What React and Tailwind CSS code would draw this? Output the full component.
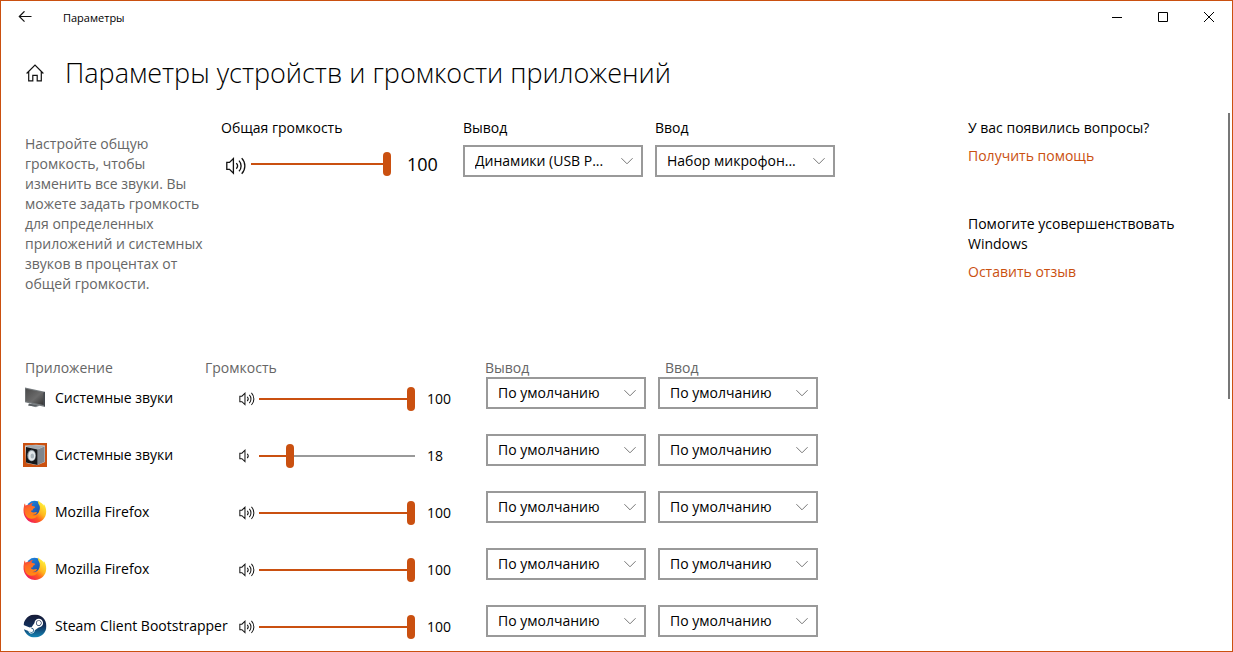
import { useState } from "react";
import { SiSteam } from "react-icons/si";

function SpeakerIcon({ className, quiet }) {
  return (
    <svg className={className} viewBox="0 0 20 18" fill="none" stroke="#111" strokeWidth="1.3" aria-hidden="true">
      <path d="M.8 5.4h2.7L7.4 1.6v14.6l-3.9-3.8H.8z" />
      <path d="M10.3 6.1c1.500 1.600 1.500 4 0 5.600" />
      {!quiet && <path d="M13 3.600c2.800 3 2.800 7.600 0 10.600" />}
      {!quiet && <path d="M15.700 1.100c4.200 4.500 4.200 11.100 0 15.600" />}
    </svg>
  );
}

function MonitorIcon() {
  return (
    <svg className="size-6" viewBox="0 0 24 24" aria-hidden="true">
      <defs>
        <linearGradient id="screen" x1="0" y1="0" x2="1" y2="1">
          <stop offset="0" stopColor="#4a4a4a" />
          <stop offset=".55" stopColor="#6b6b6b" />
          <stop offset="1" stopColor="#333" />
        </linearGradient>
      </defs>
      <path d="M5.500 19.200 10 17l7 2.600-4 1.700z" fill="#8b9094" />
      <path d="M2 1.500 21.800 5.700v15.200l-2-.4L2 16.200z" fill="#777c7f" />
      <path d="M2.700 2.800 20.500 6.500v12.600L2.700 15.200z" fill="url(#screen)" />
      <path d="m20.500 6.500 1.300-.8v15.200l-1.300-1.800z" fill="#30343a" />
      <path d="M6 17.500l5 1.200 4 .6-3 1.200-7-1z" fill="#595e62" />
    </svg>
  );
}

function LoudspeakerIcon() {
  return (
    <svg className="size-6" viewBox="0 0 24 24" aria-hidden="true">
      <path d="M0 0h24v24H0z" fill="#ca5010" />
      <path d="M2 2.500 13 1.800l9 .7v16.500l-8 3.200L3 20z" fill="#c9cdd1" />
      <path d="m14.500 6.500 7-3v15.300l-7 3.200z" fill="#7f858c" />
      <path d="M3 3.500 8 2l13.500 1-7 3.500z" fill="#a4a9ae" />
      <path d="M3 4l11.500 2.500V22L3 19.500z" fill="#15171a" />
      <ellipse cx="8.600" cy="12.500" rx="4.300" ry="5.800" fill="#8d979f" />
      <ellipse cx="8.800" cy="12.700" rx="3.400" ry="4.700" fill="#e2e8eb" />
      <ellipse cx="9.300" cy="13" rx="1.800" ry="2.600" fill="#a9b4bb" />
    </svg>
  );
}

function FirefoxIcon() {
  return (
    <svg className="size-6" viewBox="0 0 24 24" aria-hidden="true">
      <defs>
        <linearGradient id="flame" x1=".85" y1=".1" x2=".15" y2=".9">
          <stop offset="0" stopColor="#fff13a" />
          <stop offset=".4" stopColor="#ffb41c" />
          <stop offset=".65" stopColor="#ff5a1f" />
          <stop offset="1" stopColor="#f01560" />
        </linearGradient>
        <linearGradient id="globe" x1="0" y1="0" x2="1" y2="1">
          <stop offset="0" stopColor="#1a90e8" />
          <stop offset="1" stopColor="#1f3c98" />
        </linearGradient>
        <linearGradient id="fox" x1="0" y1="0" x2=".4" y2="1">
          <stop offset="0" stopColor="#f0304a" />
          <stop offset=".4" stopColor="#ff6a26" />
          <stop offset="1" stopColor="#ff8a14" />
        </linearGradient>
      </defs>
      <circle cx="11.500" cy="9" r="8.200" fill="url(#globe)" />
      <path d="M15.500.3c-.8 2.200-.2 3.500.8 4.900 1 1.600.6 5.200-.7 7.300-1 1.700-3 2.500-5 2.500L3 13 2 3.200C.4 6.500 0 11.500 1.200 15c1.800 5 6.200 8 10.800 8 6.300 0 11.200-4.900 11.200-11.200 0-3-.8-5.800-2.400-7.700v1.600C19.500 3 16.200 2.600 15.500.3z" fill="url(#flame)" />
      <path d="M2.100 3.200c-.2 1 .1 2 .4 2.600 1.200-1 2.400-1.400 3.800-1 1-1.200 2.300-1.900 3.900-2-1.200.9-1.700 1.900-1.600 2.800.9 1 3 .6 3.500 1.300-.1 1.200-2.100 1.700-2.300 2.300.2 1.300-.6 1.500-1.500 1.300-.9.800.3 2 2 2.100 1.500.1 2.400-.8 3.700-.4-.7 1.900-2.700 2.900-4.900 2.800 1.500 1 3.500.9 5.300-.2-.9 3-3 4-6 4-4.500-.2-6.900-3.900-6.800-8.200C1.100 8.300.8 5.600 2.100 3.200z" fill="url(#fox)" />
    </svg>
  );
}

function SteamIcon() {
  return (
    <svg className="size-6" viewBox="0 0 24 24" aria-hidden="true">
      <defs>
        <linearGradient id="steam" x1="0" y1="0" x2="0" y2="1">
          <stop offset="0" stopColor="#171a35" />
          <stop offset=".5" stopColor="#12305c" />
          <stop offset="1" stopColor="#1387b8" />
        </linearGradient>
      </defs>
      <circle cx="12" cy="12" r="11" fill="#fff" />
      <SiSteam x="0.500" y="0.500" size="23" fill="url(#steam)" />
    </svg>
  );
}

function VolumeSlider({ label, value, onChange, className }) {
  const fill = `linear-gradient(to right, #ca5010 ${value}%, #999 ${value}%)`;
  return (
    <input
      type="range"
      min="0"
      max="100"
      value={value}
      onChange={(e) => onChange(Number(e.target.value))}
      aria-label={label}
      style={{ backgroundImage: fill }}
      className={`h-6 cursor-pointer appearance-none bg-transparent bg-[length:100%_2px] bg-center bg-no-repeat [&::-webkit-slider-thumb]:h-6 [&::-webkit-slider-thumb]:w-2 [&::-webkit-slider-thumb]:appearance-none [&::-webkit-slider-thumb]:rounded-full [&::-webkit-slider-thumb]:bg-[#ca5010] ${className}`}
    />
  );
}

function DeviceSelect({ id, label, value, className }) {
  return (
    <div className={`grid shrink-0 items-center ${className}`}>
      <select
        id={id}
        aria-label={label}
        className="col-start-1 row-start-1 h-8 w-full appearance-none border-2 border-[#999] bg-white pr-7 pl-[10px] text-sm text-black"
      >
        <option>{value}</option>
      </select>
      <svg
        className="pointer-events-none col-start-1 row-start-1 mr-[10px] h-2 w-3 justify-self-end"
        viewBox="0 0 12 8"
        fill="none"
        stroke="#777"
        aria-hidden="true"
      >
        <path d="m.4 1.200 5.600 5.600 5.600-5.600" />
      </svg>
    </div>
  );
}

function AppRow({ icon: Icon, name, initial }) {
  const [volume, setVolume] = useState(initial);
  return (
    <tr className="flex h-[57px] items-start last:h-11">
      <td className="flex h-[42px] w-[216px] shrink-0 items-center gap-2 whitespace-nowrap">
        <Icon />
        {name}
      </td>
      <td className="flex h-[44px] w-[247px] shrink-0 items-center">
        <SpeakerIcon className="mr-1 h-[14px] w-4 shrink-0" quiet={volume < 33} />
        <VolumeSlider label={`Громкость: ${name}`} value={volume} onChange={setVolume} className="mr-3 w-[156px]" />
        {volume}
      </td>
      <td className="w-[172px] shrink-0">
        <DeviceSelect label={`Вывод: ${name}`} value="По умолчанию" className="w-40" />
      </td>
      <td>
        <DeviceSelect label={`Ввод: ${name}`} value="По умолчанию" className="w-40" />
      </td>
    </tr>
  );
}

const apps = [
  { icon: MonitorIcon, name: "Системные звуки", initial: 100 },
  { icon: LoudspeakerIcon, name: "Системные звуки", initial: 18 },
  { icon: FirefoxIcon, name: "Mozilla Firefox", initial: 100 },
  { icon: FirefoxIcon, name: "Mozilla Firefox", initial: 100 },
  { icon: SteamIcon, name: "Steam Client Bootstrapper", initial: 100 },
];

function TitleBar() {
  const control = "flex h-8 w-[46px] items-center justify-center hover:bg-gray-200";
  return (
    <header className="flex h-8 items-center">
      <button aria-label="Назад" className="flex h-8 w-12 items-center justify-center hover:bg-gray-200">
        <svg className="h-3 w-[14px]" viewBox="0 0 14 12" fill="none" stroke="#111" strokeWidth="1.200">
          <path d="M13.500 5.500H1.500M6.500.3 1.300 5.500l5.200 5.200" />
        </svg>
      </button>
      <span className="ml-[14px] pt-0.5 text-[11px]">Параметры</span>
      <div className="ml-auto flex">
        <button aria-label="Свернуть" className={control}>
          <svg className="h-[11px] w-[10px]" viewBox="0 0 10 11" stroke="#000"><path d="M0 5.500h10" /></svg>
        </button>
        <button aria-label="Развернуть" className={control}>
          <svg className="size-[10px]" viewBox="0 0 10 10" fill="none" stroke="#000"><path d="M.5.5h9v9h-9z" /></svg>
        </button>
        <button aria-label="Закрыть" className={control}>
          <svg className="size-[10px]" viewBox="0 0 10 10" fill="none" stroke="#000"><path d="m0 0 10 10M10 0 0 10" /></svg>
        </button>
      </div>
    </header>
  );
}

export default function App() {
  const [master, setMaster] = useState(100);
  return (
    <div className="flex min-h-screen flex-col border border-[#ca5010] bg-white font-['Open_Sans','Noto_Sans',sans-serif] text-sm leading-5 text-black">
      <TitleBar />

      <div className="mt-5 flex h-10 items-center pl-6">
        <button aria-label="Главная" className="flex size-5 items-center justify-center">
          <svg className="size-[18px]" viewBox="0 0 18 18" fill="none" stroke="#111" strokeWidth="1.200">
            <path d="M.6 9.500 9 1.100l8.400 8.400M2.700 7.800v9.100h4.100v-5.600h4.400v5.600h4.100V7.800" />
          </svg>
        </button>
        <h1 className="ml-5 text-[27px] leading-10 font-light">Параметры устройств и громкости приложений</h1>
      </div>

      <div className="mt-5 flex grow items-start pl-6">
        <main className="grow">
          <section className="flex h-[245px] items-start pt-[5px]">
            <p className="w-[184px] pt-4 text-[#666]">
              Настройте общую громкость, чтобы изменить все звуки. Вы можете задать громкость для определенных приложений и системных звуков в процентах от общей громкости.
            </p>
            <div className="ml-3 w-[242px]">
              <h2>Общая громкость</h2>
              <div className="mt-[10px] flex h-8 items-center">
                <SpeakerIcon className="mt-1 mr-1 ml-1 h-[18px] w-[22px]" />
                <VolumeSlider label="Общая громкость" value={master} onChange={setMaster} className="mr-4 w-[140px]" />
                <output className="text-lg">{master}</output>
              </div>
            </div>
            <div className="w-48">
              <label htmlFor="output">Вывод</label>
              <DeviceSelect id="output" value="Динамики (USB P..." className="mt-[7px] w-[180px]" />
            </div>
            <div className="w-48">
              <label htmlFor="input">Ввод</label>
              <DeviceSelect id="input" value="Набор микрофон..." className="mt-[7px] w-[180px]" />
            </div>
          </section>

          <table className="block text-left">
            <thead className="block text-[#666]">
              <tr className="flex h-[19px] items-center">
                <th className="w-[180px] font-normal">Приложение</th>
                <th className="w-[280px] font-normal">Громкость</th>
                <th className="w-[180px] font-normal">Вывод</th>
                <th className="font-normal">Ввод</th>
              </tr>
            </thead>
            <tbody className="-ml-[2px] block">
              {apps.map((app, i) => (
                <AppRow key={i} {...app} />
              ))}
            </tbody>
          </table>
        </main>

        <aside className="w-[260px] shrink-0 pt-[5px]">
          <h2>У вас появились вопросы?</h2>
          <a href="#help" className="mt-2 block text-[#ca5010]">Получить помощь</a>
          <h2 className="mt-12 max-w-[220px]">Помогите усовершенствовать Windows</h2>
          <a href="#feedback" className="mt-2 block text-[#ca5010]">Оставить отзыв</a>
        </aside>
        <div className="mr-[2px] h-[286px] w-[2px] shrink-0 bg-[#777]" />
      </div>
    </div>
  );
}
